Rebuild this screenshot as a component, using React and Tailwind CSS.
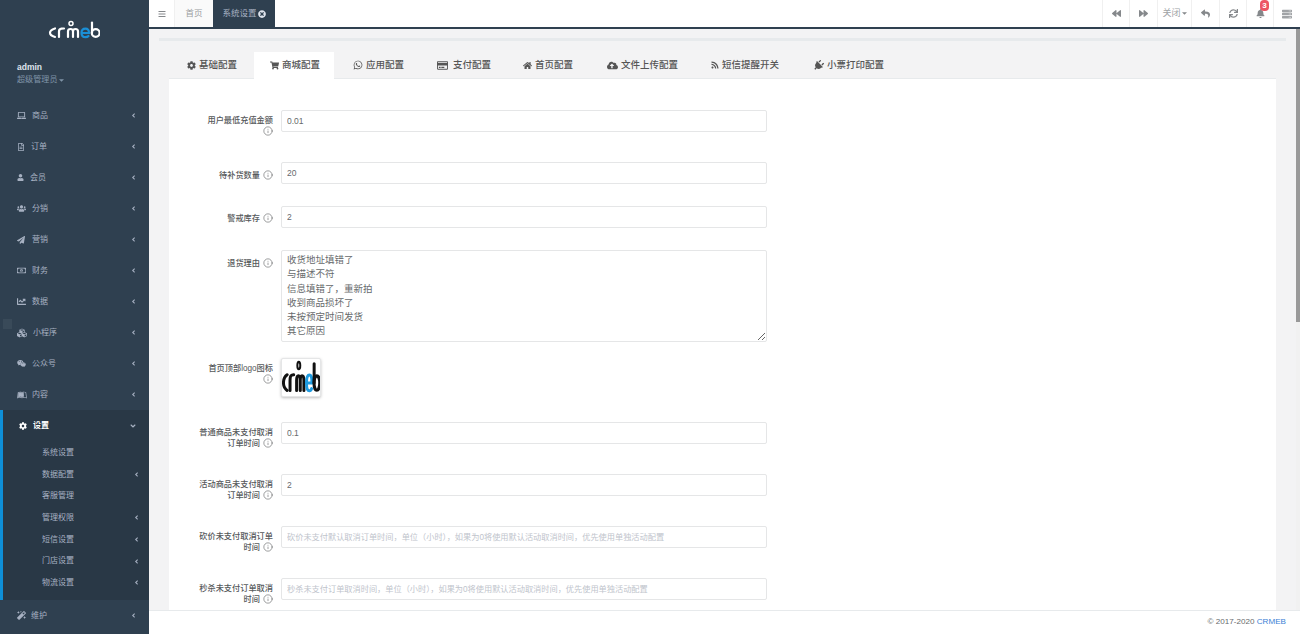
import { Info } from 'lucide-react';
import {
  FaAngleLeft, FaAngleDown, FaBackward, FaBars, FaBell, FaChartLine, FaCloudUploadAlt, FaCog, FaCubes,
  FaForward, FaHome, FaLaptop, FaLeanpub, FaMagic, FaPaperPlane, FaPlug, FaRegCreditCard, FaRegFileAlt,
  FaRegMoneyBillAlt, FaReply, FaRss, FaServer, FaShoppingCart, FaSync, FaTimesCircle, FaUser, FaUsers,
  FaWeixin, FaWhatsapp,
} from 'react-icons/fa';

const navItems = [
  { label: '商品', icon: FaLaptop, size: 'text-[9px]', gap: 'gap-[6px]' },
  { label: '订单', icon: FaRegFileAlt, size: 'text-[8px]', gap: 'gap-[6px]' },
  { label: '会员', icon: FaUser, size: 'text-[7px]', gap: 'gap-[6px]' },
  { label: '分销', icon: FaUsers, size: 'text-[9px]', gap: 'gap-[6px]' },
  { label: '营销', icon: FaPaperPlane, size: 'text-[8px]', gap: 'gap-[7px]' },
  { label: '财务', icon: FaRegMoneyBillAlt, size: 'text-[9px]', gap: 'gap-[6px]' },
  { label: '数据', icon: FaChartLine, size: 'text-[9px]', gap: 'gap-[6px]' },
  { label: '小程序', icon: FaCubes, size: 'text-[10px]', gap: 'gap-[6px]' },
  { label: '公众号', icon: FaWeixin, size: 'text-[9px]', gap: 'gap-[6px]' },
  { label: '内容', icon: FaLeanpub, size: 'text-[10px]', gap: 'gap-[5px]' },
];

const subItems = [
  { label: '系统设置' },
  { label: '数据配置', arrow: true },
  { label: '客服管理' },
  { label: '管理权限', arrow: true },
  { label: '短信设置', arrow: true },
  { label: '门店设置', arrow: true },
  { label: '物流设置', arrow: true },
];

// tab widths and icon offsets differ tab by tab in the screenshot
const tabs = [
  { label: '基础配置', icon: FaCog, size: 'text-[9px]', box: 'w-[84px] pl-[17px] gap-[3px]' },
  { label: '商城配置', icon: FaShoppingCart, size: 'text-[9px]', box: 'w-[80px] pl-[16px] gap-[3px]', active: true },
  { label: '应用配置', icon: FaWhatsapp, size: 'text-[10px]', box: 'w-[87px] pl-[19px] gap-[3px]' },
  { label: '支付配置', icon: FaRegCreditCard, size: 'text-[11px]', box: 'w-[86px] pl-[16px] gap-[5px]' },
  { label: '首页配置', icon: FaHome, size: 'text-[9px]', box: 'w-[84px] pl-[16px] gap-[3px]' },
  { label: '文件上传配置', icon: FaCloudUploadAlt, size: 'text-[11px]', box: 'w-[104px] pl-[16px] gap-[3px]' },
  { label: '短信提醒开关', icon: FaRss, size: 'text-[8px]', box: 'w-[101px] pl-[16px] gap-[3px]' },
  { label: '小票打印配置', icon: FaPlug, size: 'text-[11px] rotate-45', box: 'w-[104px] pl-[17px] gap-[3px]' },
];

const fields = [
  { label: '用户最低充值金额', value: '0.01', rowClass: 'h-[30px] mb-[22px]', labelClass: 'pt-[5px]' },
  { label: '待补货数量', value: '20', rowClass: 'h-[22px] mb-[22px]', labelClass: 'pt-[8px]' },
  { label: '警戒库存', value: '2', rowClass: 'h-[22px] mb-[22px]', labelClass: 'pt-[7px]' },
];

const timeFields = [
  { label: '普通商品未支付取消订单时间', value: '0.1' },
  { label: '活动商品未支付取消订单时间', value: '2' },
  { label: '砍价未支付取消订单时间', hint: '砍价未支付默认取消订单时间，单位（小时），如果为0将使用默认活动取消时间，优先使用单独活动配置' },
  { label: '秒杀未支付订单取消时间', hint: '秒杀未支付订单取消时间，单位（小时），如果为0将使用默认活动取消时间，优先使用单独活动配置' },
];

const reasons = '收货地址填错了\n与描述不符\n信息填错了，重新拍\n收到商品损坏了\n未按预定时间发货\n其它原因';

function Logo({ dark, className }) {
  const main = dark ? '#111111' : '#ffffff';
  const blue = dark ? '#1f9be0' : '#1b8fd6';
  // the thumbnail stretches the logo, so keep its strokes even and heavy
  const ve = dark ? 'non-scaling-stroke' : undefined;
  const sw = dark ? 3 : 2.2;
  return (
    <svg viewBox="0 0 52 20" className={className} preserveAspectRatio="none" fill="none" strokeWidth={sw} strokeLinecap="round">
      <path vectorEffect={ve} d="M7 8.5 Q2 10 2 12.8 Q2 15.6 7 17" stroke={main} />
      <path vectorEffect={ve} d="M11 17 V11.5 Q11 9 13.5 8.7 L16 8.5" stroke={main} />
      <path vectorEffect={ve} d="M20 17 V11.5 Q20 9 22.5 9 Q25 9 25 11.5 V17 M25 11.5 Q25 9 27.5 9 Q30 9 30 11.5 V17" stroke={main} />
      <circle vectorEffect={ve} cx="23" cy="3.5" r="2" stroke={main} strokeWidth={dark ? 2 : 1.5} />
      <path vectorEffect={ve} d="M34 13 H41 Q41 8.6 37.5 8.6 Q33.5 8.6 33.5 13 Q33.5 17.2 37.5 17.2 Q39.5 17.2 40.5 16" stroke={blue} />
      <path vectorEffect={ve} d="M44 2.5 V13" stroke={main} />
      <circle vectorEffect={ve} cx="47.7" cy="13" r="3.9" stroke={main} />
    </svg>
  );
}

function NavRow({ label, icon: Icon, size, gap }) {
  return (
    <div className="flex h-[31px] shrink-0 items-center pl-[17px] pr-[12px]">
      <span className={`flex flex-1 items-center ${gap}`}>
        <Icon className={size} />
        {label}
      </span>
      <FaAngleLeft className="text-[7px]" />
    </div>
  );
}

function Sidebar() {
  return (
    <aside className="relative flex h-full w-[149px] shrink-0 flex-col bg-[#2f4050] text-[8px] text-[#a7b1c2]">
      <div className="h-[100px] shrink-0 pl-[17px]">
        <div className="flex h-[52px] items-start pl-[31px] pt-[20px]">
          <Logo className="h-[20px] w-[52px]" />
        </div>
        <div className="mt-[9px] text-[8.5px] font-bold leading-[12px] text-[#dfe4ed]">admin</div>
        <div className="mt-[1px] flex items-center gap-[2px] text-[8.1px] leading-[12px] text-[#8095a8]">
          超级管理员
          <svg viewBox="0 0 8 4" className="h-[3px] w-[5px] fill-[#8095a8]"><path d="M0 0h8L4 4z" /></svg>
        </div>
      </div>

      {navItems.map((item) => (
        <NavRow key={item.label} {...item} />
      ))}

      <div className="h-[190px] shrink-0 border-l-[3px] border-[#0e8fd8] bg-[#293846]">
        <div className="flex h-[32px] items-center pl-[16px] pr-[12px] font-bold text-white">
          <span className="flex w-[14px] justify-start text-[8px]"><FaCog /></span>
          <span className="flex-1">设置</span>
          <FaAngleDown className="text-[8px] text-[#a7b1c2]" />
        </div>
        {subItems.map((sub) => (
          <div key={sub.label} className="flex h-[21.7px] items-center pl-[39px] pr-[9px]">
            <span className="flex-1">{sub.label}</span>
            {sub.arrow && <FaAngleLeft className="text-[7px]" />}
          </div>
        ))}
      </div>

      <NavRow label="维护" icon={FaMagic} size="text-[9px]" gap="gap-[5px]" />

      {/* faint mini-nav toggle sitting over the menu */}
      <div className="absolute left-[3px] top-[319px] h-[10px] w-[9px] bg-white/5" />
    </aside>
  );
}

function TopButton({ children, className }) {
  return (
    <div className={`flex h-full items-center justify-center border-l border-[#f0f0f0] text-[9px] text-[#85888b] ${className}`}>
      {children}
    </div>
  );
}

function TopBar() {
  return (
    <header className="flex h-[29px] shrink-0 border-b-[2px] border-[#2f4050] bg-white text-[8.5px]">
      <div className="flex w-[26px] items-center justify-center border-r border-[#f0f0f0] text-[8px] text-[#85888b]">
        <FaBars />
      </div>
      <div className="flex w-[38px] items-center justify-center bg-[#fafafa] text-[#999c9e]">首页</div>
      <div className="flex w-[62px] items-center justify-center gap-[1px] bg-[#2f4050] text-[#a7b1c2]">
        系统设置
        <FaTimesCircle className="text-[8px] text-[#dfe4ed]" />
      </div>
      <div className="flex-1" />
      <TopButton className="w-[27px]"><FaBackward /></TopButton>
      <TopButton className="w-[28px]"><FaForward /></TopButton>
      <TopButton className="w-[34px] gap-[1px] text-[8.5px] text-[#a0a3a6]">
        关闭
        <svg viewBox="0 0 8 4" className="h-[3px] w-[5px] fill-[#85888b]"><path d="M0 0h8L4 4z" /></svg>
      </TopButton>
      <TopButton className="w-[28px]"><FaReply /></TopButton>
      <TopButton className="w-[27px]"><FaSync /></TopButton>
      <TopButton className="relative w-[27px]">
        <FaBell />
        <span className="absolute left-[13px] top-0 flex h-[11px] w-[9px] items-center justify-center rounded-[4px] bg-[#ed5565] text-[8px] font-bold leading-none text-white">3</span>
      </TopButton>
      <TopButton className="w-[27px]"><FaServer className="text-[10px] text-[#a0a3a6]" /></TopButton>
    </header>
  );
}

function FieldLabel({ text }) {
  return (
    <div className="w-[76px] shrink-0 text-right text-[8.2px] font-medium leading-[11px] text-[#55585a]">
      {text}
      <Info size={10} strokeWidth={1.3} className="ml-[3px] inline-block align-[-2px] text-[#4a4d4f]" />
    </div>
  );
}

function Row({ label, rowClass, labelClass = 'pt-[5px]', children }) {
  return (
    <div className={`flex items-start gap-[8px] pl-[28px] ${rowClass}`}>
      <div className={labelClass}><FieldLabel text={label} /></div>
      {children}
    </div>
  );
}

function TextField({ value, hint }) {
  return (
    <input
      readOnly
      defaultValue={value}
      placeholder={hint}
      className="h-[22px] w-[486px] rounded-[2px] border border-[#e5e6e7] bg-white px-[5px] text-[8.5px] text-[#676a6c] outline-none placeholder:text-[8.2px] placeholder:text-[#c0c4cc]"
    />
  );
}

function ConfigForm() {
  return (
    <div className="flex-1 overflow-hidden bg-white pt-[31px]">
      {fields.map((f) => (
        <Row key={f.label} label={f.label} rowClass={f.rowClass} labelClass={f.labelClass}>
          <TextField value={f.value} />
        </Row>
      ))}

      <Row label="退货理由" rowClass="mb-[16px]" labelClass="pt-[8px]">
        <textarea
          readOnly
          defaultValue={reasons}
          className="h-[92px] w-[486px] rounded-[2px] border border-[#e5e6e7] bg-white px-[5px] pt-[2px] text-[9.5px] leading-[14.3px] text-[#676a6c] outline-none"
        />
      </Row>

      <Row label="首页顶部logo图标" rowClass="mb-[25px]">
        <div className="h-[39px] w-[40px] rounded-[2px] border border-[#e5e6e7] bg-white shadow-[0_1px_3px_rgba(0,0,0,0.25)]">
          <Logo dark className="h-full w-full" />
        </div>
      </Row>

      {timeFields.map((f) => (
        <Row key={f.label} label={f.label} rowClass="h-[30px] mb-[22px]">
          <TextField value={f.value} hint={f.hint} />
        </Row>
      ))}
    </div>
  );
}

export default function App() {
  return (
    <div className="flex h-[634px] w-[1300px] overflow-hidden bg-white font-['Liberation_Sans','Noto_Sans_CJK_SC',sans-serif]">
      <Sidebar />
      <main className="flex min-w-0 flex-1 flex-col">
        <TopBar />
        <div className="flex min-h-0 flex-1">
          <div className="flex min-w-0 flex-1 flex-col bg-[#f3f3f4] pl-[10px] pr-[10px] pt-[9px]">
            <div className="h-[3px] shrink-0 bg-[#e7eaec]" />
            <div className="flex min-h-0 flex-1 flex-col pl-[10px] pr-[10px] pt-[11px]">
              <div className="flex h-[27px] shrink-0 border-b border-[#e7eaec] pl-[1px] text-[9.5px] text-[#555]">
                {tabs.map(({ label, icon: Icon, size, box, active }) => (
                  <div
                    key={label}
                    className={`flex shrink-0 items-center font-medium ${box} ${active ? 'h-[27px] bg-white' : ''}`}
                  >
                    <Icon className={size} />
                    {label}
                  </div>
                ))}
              </div>
              <ConfigForm />
            </div>
          </div>
          <div className="h-full w-[4px] shrink-0 bg-[#f1f1f1]">
            <div className="h-[293px] bg-[#999999]" />
          </div>
        </div>
        <footer className="flex h-[24px] shrink-0 items-center justify-end border-t border-[#e7eaec] bg-white pr-[14px] text-[8.1px] text-[#676a6c]">
          © 2017-2020&nbsp;<span className="text-[#3a7fd5]">CRMEB</span>
        </footer>
      </main>
    </div>
  );
}
